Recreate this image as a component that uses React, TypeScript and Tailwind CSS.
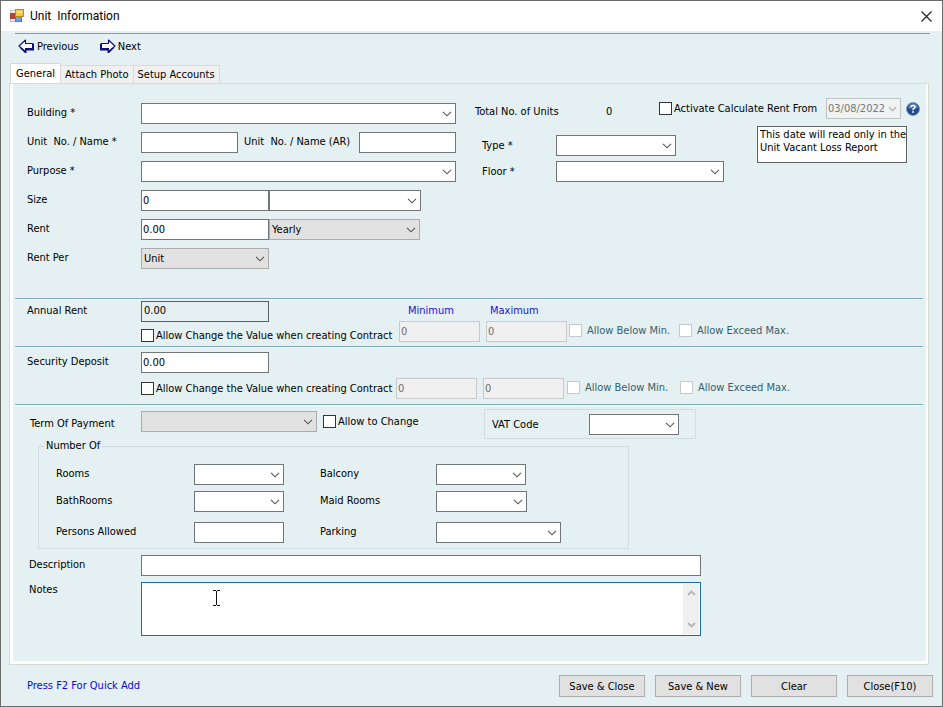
import React, { useState } from 'react';
import clsx from 'clsx';

interface ComboProps {
  id: string;
  label?: string;
  options?: string[];
  filled?: boolean;
  className?: string;
}

const Combo: React.FC<ComboProps> = ({ id, label, options = [''], filled, className }) => (
  <div className={clsx('relative h-[21px] shrink-0', className)}>
    <select
      id={id}
      aria-label={label}
      className={clsx(
        'block w-full h-full appearance-none border pl-[2px] pt-px pr-5 outline-none',
        filled ? 'bg-[#e1e1e1] border-[#acacac]' : 'bg-white border-[#70767a]'
      )}
    >
      {options.map(o => <option key={o}>{o}</option>)}
    </select>
    <svg className="absolute right-1 top-2 pointer-events-none" width="10" height="6" viewBox="0 0 10 6" fill="none" stroke="#555" strokeWidth="1.1">
      <path d="M1 0.8 L5 4.8 L9 0.8" />
    </svg>
  </div>
);

interface TextBoxProps {
  id: string;
  label?: string;
  value?: string;
  disabled?: boolean;
  className?: string;
}

const TextBox: React.FC<TextBoxProps> = ({ id, label, value = '', disabled, className }) => (
  <input
    id={id}
    type="text"
    aria-label={label}
    defaultValue={value}
    disabled={disabled}
    className={clsx(
      'block h-[21px] shrink-0 border px-px outline-none',
      disabled ? 'bg-[#f0f0f0] border-[#c6cacb] text-[#6d6d6d]' : 'bg-white border-[#70767a]',
      className
    )}
  />
);

interface CheckProps {
  label: string;
  disabled?: boolean;
  className?: string;
}

const Check: React.FC<CheckProps> = ({ label, disabled, className }) => (
  <label className={clsx('flex items-center shrink-0 whitespace-nowrap', disabled ? 'gap-[5px] text-[#39606e]' : 'gap-[2px]', className)}>
    <input
      type="checkbox"
      disabled={disabled}
      className={clsx('appearance-none shrink-0 w-[13px] h-[13px] border bg-white checked:bg-[#333]', disabled ? 'border-[#c6cacb]' : 'border-[#333]')}
    />
    <span className="pt-px">{label}</span>
  </label>
);

const Label: React.FC<{ htmlFor: string; className?: string; children: React.ReactNode }> = ({ htmlFor, className, children }) => (
  <label htmlFor={htmlFor} className={clsx('shrink-0 whitespace-pre pb-[2px]', className)}>{children}</label>
);

const Divider = () => <div className="ml-[2px] mr-[3px] h-[2px] border-t border-[#7aa9b8] bg-white" />;

const ArrowIcon: React.FC<{ flip?: boolean }> = ({ flip }) => (
  <svg width="17" height="15" viewBox="0 0 17 15" className={flip ? '-scale-x-100' : ''}>
    <path d="M7.5 1 L1 7 L7.5 13 V10 H15 V4.5 H7.5 Z" fill="#fff" stroke="#10107c" strokeWidth="1.1" strokeLinejoin="round" />
    <path d="M7 9 H14 V5 H16 V11.5 H8.5 V14 H7 L2 9 L3.5 8.5 L7 11.5 Z" fill="#10107c" />
  </svg>
);

const AppIcon = () => (
  <svg width="14" height="14" viewBox="0 0 14 14">
    <rect x="0.5" y="1.5" width="5" height="3" fill="#f1f1f1" stroke="#c9c9c9" />
    <rect x="0.5" y="9.5" width="5" height="3" fill="#f1f1f1" stroke="#b9b9b9" />
    <rect x="0.5" y="4.5" width="5" height="5" fill="#cf3a30" stroke="#a3463d" />
    <rect x="5.5" y="7.5" width="6" height="5" fill="#6b9fe8" stroke="#4a78b8" />
    <rect x="5.5" y="0.5" width="8" height="7" fill="#f7c843" stroke="#b98a1c" />
    <rect x="7" y="2" width="5" height="2" fill="#fde58a" />
  </svg>
);

const HelpIcon = () => (
  <svg width="14" height="14" viewBox="0 0 14 14">
    <circle cx="7" cy="7" r="6.5" fill="#234a8c" stroke="#8094b5" strokeWidth="0.8" />
    <path d="M2 6 A5 5 0 0 1 12 6 Q7 8 2 6 Z" fill="#5579b3" />
    <path d="M5 5.2 Q5 3.4 7 3.4 Q9 3.4 9 5 Q9 6 7.8 6.7 Q7 7.2 7 8.2" fill="none" stroke="#fff" strokeWidth="1.5" />
    <rect x="6.2" y="9.2" width="1.7" height="1.6" fill="#fff" />
  </svg>
);

const tabs = ['General', 'Attach Photo', 'Setup Accounts'];
const actions = ['Save & Close', 'Save & New', 'Clear', 'Close(F10)'];

const App: React.FC = () => {
  const [tab, setTab] = useState('General');

  return (
    <div className="min-h-screen flex flex-col border border-[#6b6b6b] bg-[#e4f0f2] text-[11px] leading-[14px] text-black font-['DejaVu_Sans_Condensed','DejaVu_Sans',sans-serif]">

      {/* Title bar */}
      <header className="h-[30px] shrink-0 flex items-center justify-between bg-white pl-[9px] pr-[10px]">
        <div className="flex items-center gap-[6px]">
          <AppIcon />
          <h1 className="text-xs whitespace-pre font-['Roboto',sans-serif]">Unit  Information</h1>
        </div>
        <button aria-label="Close window">
          <svg width="11" height="11" viewBox="0 0 11 11" stroke="#222" strokeWidth="1.2"><path d="M0.5 0.5 L10.5 10.5 M10.5 0.5 L0.5 10.5" /></svg>
        </button>
      </header>

      {/* Toolbar */}
      <nav className="mt-[2px] ml-[14px] mr-3 h-[30px] shrink-0 flex items-center gap-5 border-t border-[#8d9c9f] pl-[3px] pb-1">
        <button className="flex items-center gap-[2px]"><ArrowIcon />Previous</button>
        <button className="flex items-center gap-[2px]"><ArrowIcon flip />Next</button>
      </nav>

      {/* Tabs */}
      <div role="tablist" className="flex items-end h-5 pl-[9px] shrink-0">
        {tabs.map(t => (
          <button
            key={t}
            role="tab"
            aria-selected={tab === t}
            onClick={() => setTab(t)}
            className={clsx(
              'border border-b-0 border-[#d9d9d9] whitespace-nowrap',
              tab === t ? 'h-5 px-[5px] bg-white' : 'h-[18px] px-1 pt-px border-l-0 bg-[#f0f0f0]'
            )}
          >
            {t}
          </button>
        ))}
      </div>

      {/* Tab page */}
      <main className="flex-1 ml-2 mr-[13px] border border-[#d5dadb] bg-white p-[3px] pt-0 pr-[2px] flex">
        <div className="flex-1 bg-[#e4f0f2]">

          <section className="flex items-start pl-[14px] pt-[14px] pb-[29px] gap-[19px]">
            <div className="flex flex-col gap-2 pt-[5px] w-[429px] shrink-0">
              <div className="flex items-center">
                <Label htmlFor="building" className="w-[114px]">Building *</Label>
                <Combo id="building" className="flex-1" />
              </div>
              <div className="flex items-center">
                <Label htmlFor="unit" className="w-[114px]">Unit  No. / Name *</Label>
                <TextBox id="unit" className="w-[97px]" />
                <Label htmlFor="unit-ar" className="w-[121px] pl-[6px]">Unit  No. / Name (AR)</Label>
                <TextBox id="unit-ar" className="w-[97px]" />
              </div>
              <div className="flex items-center">
                <Label htmlFor="purpose" className="w-[114px]">Purpose *</Label>
                <Combo id="purpose" className="flex-1" />
              </div>
              <div className="flex items-center">
                <Label htmlFor="size" className="w-[114px]">Size</Label>
                <TextBox id="size" value="0" className="w-[128px]" />
                <Combo id="size-unit" label="Size unit" className="w-[152px]" />
              </div>
              <div className="flex items-center">
                <Label htmlFor="rent" className="w-[114px]">Rent</Label>
                <TextBox id="rent" value="0.00" className="w-[128px]" />
                <Combo id="rent-period" label="Rent period" options={['Yearly', 'Monthly']} filled className="w-[151px]" />
              </div>
              <div className="flex items-center">
                <Label htmlFor="rent-per" className="w-[114px]">Rent Per</Label>
                <Combo id="rent-per" options={['Unit', 'Area']} filled className="w-[128px]" />
              </div>
            </div>

            <div className="flex flex-col gap-[7px] flex-1">
              <div className="flex items-center">
                <span className="w-[131px] pt-[7px]">Total No. of Units</span>
                <span className="w-[53px] pt-[7px]">0</span>
                <Check label="Activate Calculate Rent From" className="w-[167px]" />
                <div className="relative h-[21px] w-[75px] shrink-0">
                  <input aria-label="Rent from date" disabled defaultValue="03/08/2022" className="block w-full h-full border border-[#bfc3c4] bg-[#f0f3f3] pl-px text-[#777]" />
                  <svg className="absolute right-1 top-2" width="9" height="6" viewBox="0 0 10 6" fill="none" stroke="#aaa" strokeWidth="1.2">
                    <path d="M1 0.8 L5 4.8 L9 0.8" />
                  </svg>
                </div>
                <button aria-label="Help" className="ml-[5px]"><HelpIcon /></button>
              </div>
              <div className="flex items-start">
                <div className="w-[282px] pl-[7px] pt-[9px] flex flex-col gap-[5px]">
                  <div className="flex items-center">
                    <Label htmlFor="type" className="w-[74px] pt-[3px]">Type *</Label>
                    <Combo id="type" className="w-[120px]" />
                  </div>
                  <div className="flex items-center">
                    <Label htmlFor="floor" className="w-[74px] pt-[3px]">Floor *</Label>
                    <Combo id="floor" className="w-[168px]" />
                  </div>
                </div>
                <p className="w-[150px] h-[37px] border border-[#5d6265] bg-white px-[2px] pt-px leading-[13px] whitespace-nowrap">
                  This date will read only in the<br />Unit Vacant Loss Report
                </p>
              </div>
            </div>
          </section>

          <Divider />

          {/* Annual rent */}
          <section className="flex pl-[14px] pt-px h-[46px]">
            <Label htmlFor="annual" className="w-[114px] pt-[3px]">Annual Rent</Label>
            <div className="w-[258px] flex flex-col gap-[6px]">
              <input id="annual" readOnly value="0.00" className="block w-[128px] h-[21px] border border-[#5a5f62] px-[2px] pb-[3px] outline-none" />
              <Check label="Allow Change the Value when creating Contract" />
            </div>
            <div className="w-[81px] mr-[6px] flex flex-col gap-[3px]">
              <label htmlFor="annual-min" className="pl-[9px] pt-[3px] text-[#1414d2]">Minimum</label>
              <TextBox id="annual-min" value="0" disabled />
            </div>
            <div className="w-[81px] mr-[2px] flex flex-col gap-[3px]">
              <label htmlFor="annual-max" className="pl-1 pt-[3px] text-[#1414d2]">Maximum</label>
              <TextBox id="annual-max" value="0" disabled />
            </div>
            <Check label="Allow Below Min." disabled className="w-[110px] pt-[14px]" />
            <Check label="Allow Exceed Max." disabled className="pt-[14px]" />
          </section>

          <Divider />

          {/* Security deposit */}
          <section className="flex pl-[14px] pt-1 h-14">
            <Label htmlFor="deposit" className="w-[114px] pt-[3px]">Security Deposit</Label>
            <div className="w-[255px] flex flex-col gap-[8px]">
              <TextBox id="deposit" value="0.00" className="w-[128px]" />
              <Check label="Allow Change the Value when creating Contract" />
            </div>
            <TextBox id="deposit-min" label="Minimum deposit" value="0" disabled className="w-[81px] mt-[26px] mr-[6px]" />
            <TextBox id="deposit-max" label="Maximum deposit" value="0" disabled className="w-[81px] mt-[26px] mr-[3px]" />
            <Check label="Allow Below Min." disabled className="w-[113px] pt-[18px]" />
            <Check label="Allow Exceed Max." disabled className="pt-[18px]" />
          </section>

          <Divider />

          {/* Payment terms */}
          <section className="flex items-start pl-[17px] pt-[3px]">
            <Label htmlFor="term" className="w-[111px] pt-[8px]">Term Of Payment</Label>
            <Combo id="term" filled className="w-[176px] mt-[2px]" />
            <Check label="Allow to Change" className="w-[161px] ml-[6px] mt-[5px]" />
            <div className="flex items-center w-[212px] h-[30px] border border-[#d3dcde] pl-[7px]">
              <Label htmlFor="vat" className="w-[97px] pt-[3px]">VAT Code</Label>
              <Combo id="vat" className="w-[90px]" />
            </div>
          </section>

          <fieldset className="ml-[25px] w-[591px] border border-[#d3dcde] pl-[17px] pt-[11px] pb-[5px]">
            <legend className="-ml-[12px] px-[2px]">Number Of</legend>
            <div className="flex flex-col gap-[6px]">
              <div className="flex items-center">
                <Label htmlFor="rooms" className="w-[138px]">Rooms</Label>
                <Combo id="rooms" className="w-[90px] mr-9" />
                <Label htmlFor="balcony" className="w-[116px]">Balcony</Label>
                <Combo id="balcony" className="w-[90px]" />
              </div>
              <div className="flex items-center">
                <Label htmlFor="bathrooms" className="w-[138px]">BathRooms</Label>
                <Combo id="bathrooms" className="w-[90px] mr-9" />
                <Label htmlFor="maid" className="w-[116px]">Maid Rooms</Label>
                <Combo id="maid" className="w-[91px]" />
              </div>
              <div className="flex items-center pt-1">
                <Label htmlFor="persons" className="w-[138px]">Persons Allowed</Label>
                <TextBox id="persons" className="w-[90px] mr-9" />
                <Label htmlFor="parking" className="w-[116px]">Parking</Label>
                <Combo id="parking" className="w-[125px]" />
              </div>
            </div>
          </fieldset>

          {/* Description and notes */}
          <section className="flex flex-col gap-[6px] pl-4 pt-[6px] pb-[25px] w-[688px]">
            <div className="flex items-center">
              <Label htmlFor="description" className="w-28">Description</Label>
              <TextBox id="description" className="flex-1" />
            </div>
            <div className="flex items-start">
              <Label htmlFor="notes" className="w-28 pt-px">Notes</Label>
              <div className="relative flex-1 h-[54px]">
                <textarea id="notes" className="block w-full h-full resize-none border border-[#1670ae] bg-white outline-none" />
                <div className="absolute right-[2px] top-[2px] bottom-[2px] w-4 flex flex-col items-center justify-between bg-[#f0f0f0] py-[6px]">
                  <svg width="9" height="6" viewBox="0 0 9 6" fill="none" stroke="#b4b4b4" strokeWidth="1.8"><path d="M1 5 L4.5 1.5 L8 5" /></svg>
                  <svg width="9" height="6" viewBox="0 0 9 6" fill="none" stroke="#b4b4b4" strokeWidth="1.8"><path d="M1 1 L4.5 4.5 L8 1" /></svg>
                </div>
                <svg className="absolute left-[71px] top-2 pointer-events-none" width="9" height="16" viewBox="0 0 9 16" fill="none" stroke="#111">
                  <path d="M1 0.5 H4 M5 0.5 H8 M4.5 1 V15 M1 15.5 H4 M5 15.5 H8" />
                </svg>
              </div>
            </div>
          </section>
        </div>
      </main>

      {/* Footer */}
      <footer className="flex items-center justify-between pl-[26px] pr-[9px] pt-[10px] pb-[9px] shrink-0">
        <span className="text-[#0a0ad8]">Press F2 For Quick Add</span>
        <div className="flex gap-[10px]">
          {actions.map(a => (
            <button key={a} className="w-[86px] h-[22px] border border-[#adadad] bg-[#e1e1e1] pt-px">{a}</button>
          ))}
        </div>
      </footer>
    </div>
  );
};

export default App;
